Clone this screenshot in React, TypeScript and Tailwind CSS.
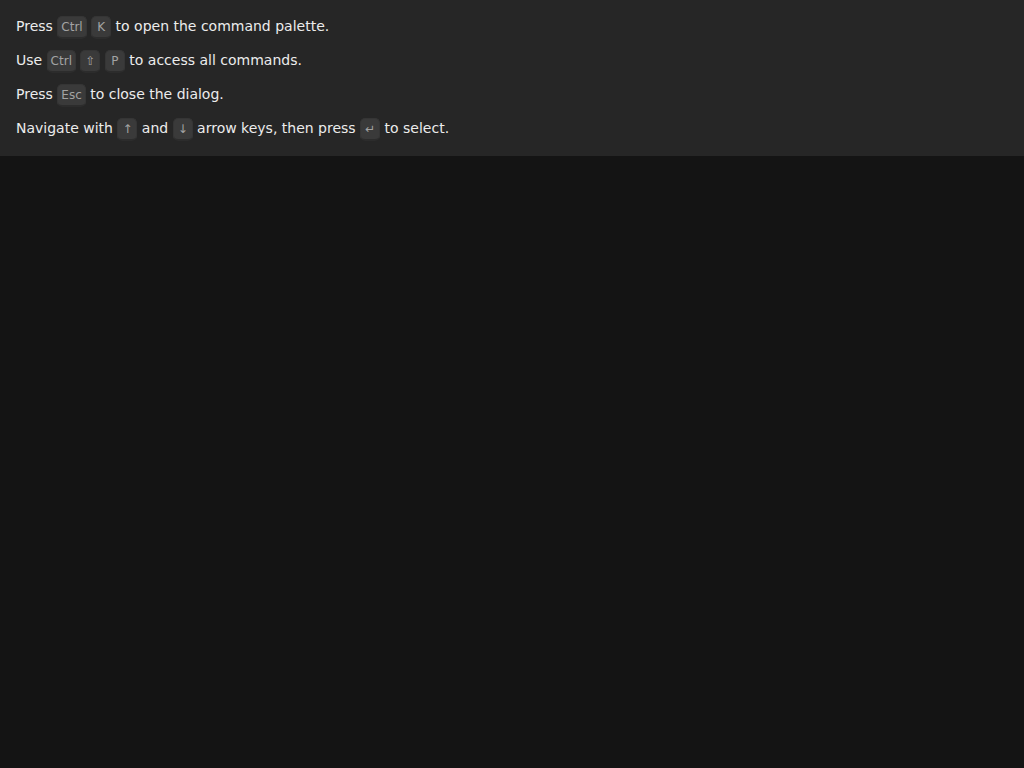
import React from "react";

function Kbd({ children }: { children: React.ReactNode }) {
  return (
    <kbd className="inline-block min-w-[20px] rounded-[5px] border border-[#353535] border-b-2 border-b-[#2c2c2c] bg-[#3a3a3a] px-[3px] py-[2px] text-center align-baseline text-[12px] leading-4 text-[#a3a3a3] [font-family:'DejaVu_Sans',sans-serif]">
      {children}
    </kbd>
  );
}

function Line({ children }: { children: React.ReactNode }) {
  return <p className="leading-[34px]">{children}</p>;
}

export default function App() {
  return (
    <div className="min-h-[768px] bg-[#141414] [font-family:'DejaVu_Sans',sans-serif]">
      <div className="bg-[#262626] px-4 pb-[11px] pt-[9px] text-[14px] text-[#ececec]">
        <Line>
          Press <Kbd>Ctrl</Kbd> <Kbd>K</Kbd> to open the command palette.
        </Line>
        <Line>
          Use <Kbd>Ctrl</Kbd> <Kbd>⇧</Kbd> <Kbd>P</Kbd> to access all commands.
        </Line>
        <Line>
          Press <Kbd>Esc</Kbd> to close the dialog.
        </Line>
        <Line>
          Navigate with <Kbd>↑</Kbd> and <Kbd>↓</Kbd> arrow keys, then press <Kbd>↵</Kbd> to select.
        </Line>
      </div>
    </div>
  );
}
